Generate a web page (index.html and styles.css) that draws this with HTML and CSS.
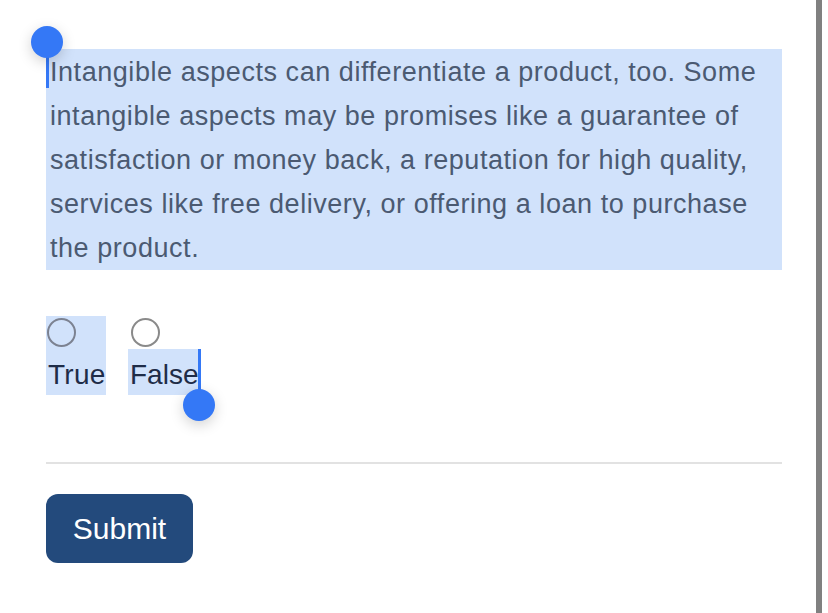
FILE: index.html
```html
<!DOCTYPE html>
<html>
<head>
<meta charset="utf-8">
<link rel="stylesheet" href="styles.css">
</head>
<body>
<div class="page">
  <div class="content">
    <p class="passage"><span class="caret caret-start"></span>Intangible aspects can differentiate a product, too. Some intangible aspects may be promises like a guarantee of satisfaction or money back, a reputation for high quality, services like free delivery, or offering a loan to purchase the product.</p>
    <div class="options">
      <label class="option option-true">
        <span class="radio"></span>
        <span class="opt-label">True</span>
      </label>
      <label class="option option-false">
        <span class="radio"></span>
        <span class="opt-label sel">False<span class="caret caret-end"></span></span>
      </label>
    </div>
    <hr class="divider">
    <button class="submit">Submit</button>
  </div>
  <div class="scrollbar"></div>
</div>
</body>
</html>
```

FILE: styles.css
```css
html, body {
  margin: 0;
  padding: 0;
  background: #ffffff;
}
.page {
  position: relative;
  width: 828px;
  height: 613px;
  overflow: hidden;
  font-family: "Liberation Sans", Arial, sans-serif;
}
.content {
  width: 736px;
  padding: 49px 0 0 46px;
}
.passage {
  position: relative;
  margin: 0;
  font-size: 27px;
  letter-spacing: 0.55px;
  line-height: 44px;
  color: #4b5a72;
  background: #d1e2fb;
  padding: 1px 0 0 4px;
}
.options {
  display: flex;
  gap: 22px;
  margin-top: 46px;
}
.option {
  display: flex;
  flex-direction: column;
  align-items: flex-start;
}
.option-true {
  background: #d1e2fb;
  width: 60px;
  padding-top: 2px;
}
.option-false {
  padding-top: 2px;
}
.radio {
  display: block;
  width: 25px;
  height: 25px;
  border: 2.5px solid #7c8291;
  border-radius: 50%;
  margin: 0 0 2px 1px;
}
.option-false .radio {
  border-color: #8a8a8a;
  margin-left: 3px;
}
.opt-label {
  display: block;
  position: relative;
  font-size: 28px;
  line-height: 40px;
  padding-top: 6px;
  color: #1e2c48;
  padding-left: 2px;
}
.option-true .opt-label {
  letter-spacing: 0.3px;
}
.opt-label.sel {
  background: #d1e2fb;
}
.divider {
  border: 0;
  height: 2px;
  background: #e2e2e2;
  margin: 67px 0 0 0;
}
.submit {
  margin-top: 30px;
  width: 147px;
  height: 69px;
  border: 0;
  border-radius: 12px;
  background: #234a7c;
  color: #ffffff;
  font-family: "Liberation Sans", Arial, sans-serif;
  font-size: 30px;
  padding: 0;
}
.caret {
  position: absolute;
  width: 3px;
  background: #3478f6;
}
.caret::after {
  content: "";
  position: absolute;
  width: 32px;
  height: 32px;
  border-radius: 50%;
  background: #3478f6;
  box-shadow: 0 4px 14px rgba(0, 0, 0, 0.18);
}
.caret-start {
  left: 0;
  top: 3px;
  height: 36px;
}
.caret-start::after {
  left: -15px;
  top: -26px;
}
.caret-end {
  right: -3px;
  top: 0;
  height: 42px;
}
.caret-end::after {
  left: -15px;
  top: 40px;
}
.scrollbar {
  position: absolute;
  top: 0;
  right: 6px;
  width: 6px;
  height: 613px;
  background: #808080;
}
```
